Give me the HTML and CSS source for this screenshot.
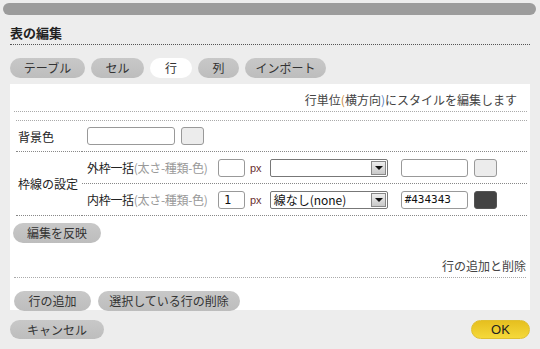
FILE: index.html
```html
<!DOCTYPE html>
<html lang="ja">
<head>
  <meta charset="UTF-8" />
  <title>表の編集</title>
  <link rel="stylesheet" href="styles.css">
</head>
<body>
  <div class="dialog">
    <div class="titlebar"></div>
    <h1 class="heading">表の編集</h1>

    <div class="tabs">
      <span class="pill tab w-table">テーブル</span>
      <span class="pill tab w-cell">セル</span>
      <span class="pill tab w-row active">行</span>
      <span class="pill tab w-col">列</span>
      <span class="pill tab w-import">インポート</span>
    </div>

    <div class="panel">
      <div class="note">行単位<span class="paren">(</span>横方向<span class="paren2">)</span>にスタイルを編集します</div>

      <div class="grid">
        <div class="label row-bg">背景色</div>
        <div class="cell row-bg">
          <span class="field w-bg"></span>
          <span class="swatch"></span>
        </div>

        <div class="label span2">枠線の設定</div>
        <div class="cell mid">
          <span class="name">外枠一括<span class="sub">(太さ-種類-色)</span></span>
          <span class="field w-num"></span>
          <span class="unit">px</span>
          <span class="select"><span class="val"></span><span class="arrow"></span></span>
          <span class="field w-color"></span>
          <span class="swatch"></span>
        </div>
        <div class="cell">
          <span class="name">内枠一括<span class="sub">(太さ-種類-色)</span></span>
          <span class="field w-num">1</span>
          <span class="unit">px</span>
          <span class="select"><span class="val">線なし(none)</span><span class="arrow"></span></span>
          <span class="field w-color">#434343</span>
          <span class="swatch dark"></span>
        </div>
      </div>

      <div class="apply-row">
        <span class="pill w-apply">編集を反映</span>
      </div>

      <div class="note section">行の追加と削除</div>

      <div class="btn-row">
        <span class="pill w-add">行の追加</span>
        <span class="pill w-del">選択している行の削除</span>
      </div>
    </div>

    <div class="footer">
      <span class="pill w-cancel">キャンセル</span>
      <span class="pill ok">OK</span>
    </div>
  </div>
</body>
</html>
```

FILE: styles.css
```css
body {
  margin: 0;
  background: #ededed;
  font-family: "Noto Sans CJK JP", "Noto Sans", sans-serif;
  font-size: 12px;
  color: #333;
}
.dialog {
  width: 540px;
  height: 349px;
  padding: 3px 0 0 0;
  box-sizing: border-box;
}
.titlebar {
  margin: 0 4px 0 3px;
  height: 12px;
  background: #9c9c9c;
  border-radius: 6px;
}
.heading {
  margin: 10px 10px 0 10px;
  padding-bottom: 3px;
  font-size: 13px;
  font-weight: bold;
  line-height: 16px;
  color: #222;
  border-bottom: 1px dotted #555;
}
.tabs {
  display: flex;
  gap: 6px;
  margin: 13px 10px 0 10px;
}
.pill {
  display: inline-flex;
  align-items: center;
  justify-content: center;
  height: 20px;
  border-radius: 10px;
  background: linear-gradient(#c8c8c8, #bdbdbd);
  color: #333;
  font-size: 12px;
  line-height: 20px;
  box-sizing: border-box;
}
.tab.active {
  background: #fff;
}
.w-table { width: 75px; }
.w-cell { width: 53px; }
.w-row { width: 42px; }
.w-col { width: 41px; }
.w-import { width: 81px; }

.panel {
  margin: 6px 10px 0 10px;
  height: 226px;
  background: #fff;
  padding: 0 3px 0 4px;
  box-sizing: border-box;
}
.note {
  text-align: right;
  color: #444;
  line-height: 16px;
  padding: 8px 10px 3px 0;
  border-bottom: 1px dotted #aaa;
}
.paren { color: #c98a3a; }
.paren2 { color: #5a7fc0; }

.grid {
  display: grid;
  grid-template-columns: 66px 1fr;
  margin: 8px 0 0 2px;
  border-top: 1px dotted #aaa;
}
.label {
  display: flex;
  align-items: center;
  padding-left: 2px;
  border-bottom: 1px dotted #888;
  color: #222;
}
.span2 {
  grid-row: span 2;
}
.cell {
  display: flex;
  align-items: center;
  height: 31px;
  padding-left: 5px;
  border-bottom: 1px dotted #888;
}
.row-bg {
  height: 30px;
}
.label.row-bg {
  height: auto;
}
.field {
  display: inline-block;
  height: 18px;
  border: 1px solid #999;
  border-radius: 3px;
  box-sizing: border-box;
  background: #fff;
  padding-left: 5px;
  line-height: 16px;
  font-family: "DejaVu Sans Mono", monospace;
  font-size: 12px;
  color: #111;
}
.w-bg { width: 88px; }
.w-num { width: 27px; margin-left: 11px; }
.w-color { width: 67px; margin-left: 13px; font-size: 11px; padding-left: 3px; }
.swatch {
  display: inline-block;
  width: 23px;
  height: 18px;
  margin-left: 6px;
  border: 1px solid #999;
  border-radius: 3px;
  background: #ececec;
  box-sizing: border-box;
}
.swatch.dark {
  background: #434343;
  border-color: #555;
}
.name {
  width: 120px;
  color: #222;
  white-space: nowrap;
  letter-spacing: -0.3px;
}
.sub {
  color: #999;
}
.unit {
  margin-left: 5px;
  color: #6b3030;
  font-family: "Liberation Sans", sans-serif;
  font-size: 11px;
}
.select {
  display: inline-flex;
  align-items: center;
  justify-content: space-between;
  width: 118px;
  height: 18px;
  margin-left: 8px;
  border: 1px solid #777;
  border-radius: 2px;
  box-sizing: border-box;
  background: #fff;
  padding: 0 1px 0 3px;
}
.val {
  color: #111;
  line-height: 16px;
}
.arrow {
  position: relative;
  width: 15px;
  height: 14px;
  background: linear-gradient(#eee, #c9c9c9);
  border: 1px solid #888;
  box-sizing: border-box;
}
.arrow::after {
  content: "";
  position: absolute;
  left: 3px;
  top: 4px;
  border-left: 4px solid transparent;
  border-right: 4px solid transparent;
  border-top: 4px solid #111;
}

.apply-row {
  padding: 7px 0 0 0;
  height: 35px;
}
.w-apply { width: 88px; margin-left: -1px; }
.section {
  padding-top: 0;
  padding-right: 0;
  margin-right: 1px;
}
.btn-row {
  display: flex;
  gap: 7px;
  padding-top: 13px;
}
.w-add { width: 77px; }
.w-del { width: 142px; }

.footer {
  display: flex;
  justify-content: space-between;
  margin: 10px 10px 0 10px;
}
.footer .pill {
  height: 19px;
}
.w-cancel { width: 94px; }
.ok {
  width: 59px;
  background: linear-gradient(#e6bf1f, #f5d93a);
  border: 1px solid #e0c030;
  color: #222;
  font-family: "Liberation Sans", sans-serif;
  font-size: 13px;
}
```
